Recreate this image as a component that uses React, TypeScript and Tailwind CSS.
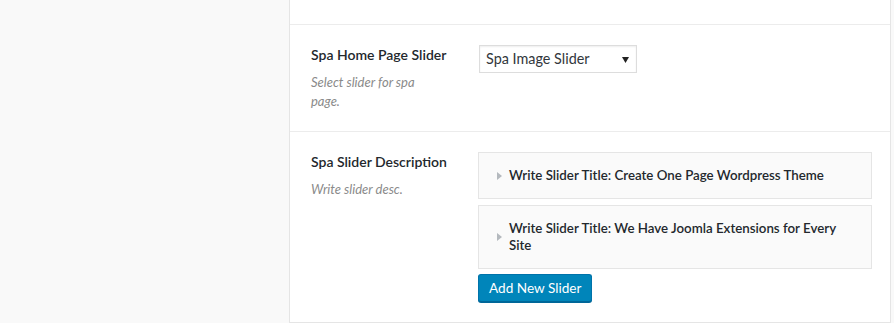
import React from "react";

type Slide = { title: string };

const slides: Slide[] = [
  { title: "Write Slider Title: Create One Page Wordpress Theme" },
  { title: "Write Slider Title: We Have Joomla Extensions for Every Site" },
];

function Caret() {
  return (
    <svg width="5" height="8" viewBox="0 0 5 8" className="shrink-0">
      <polygon points="0,0 5,4 0,8" fill="#b4b9be" />
    </svg>
  );
}

function FieldLabel({ title, desc }: { title: string; desc: string }) {
  return (
    <div className="w-[168px] shrink-0">
      <div className="text-[14px] leading-[19px] font-semibold text-[#23282d]">{title}</div>
      <p className="mt-[9px] w-[125px] text-[13px] leading-[19px] italic text-[#8a8a8a]">{desc}</p>
    </div>
  );
}

export default function App() {
  return (
    <div
      className="flex min-h-[323px] bg-[#f9f9f9]"
      style={{ fontFamily: 'Lato, "Open Sans", sans-serif' }}
    >
      <div className="w-[289px] shrink-0" />
      <div className="w-[602px] shrink-0 border-x border-b border-[#e5e5e5] bg-white">
        <div className="h-[25px] border-b border-[#ececec]" />

        <div className="flex border-b border-[#ececec] pt-5 pb-5 pl-[21px] pr-4">
          <FieldLabel title="Spa Home Page Slider" desc="Select slider for spa page." />
          <div className="relative flex h-[28px] w-[158px] items-center border border-[#dddddd] bg-white pl-[6px] shadow-[inset_0_1px_2px_rgba(0,0,0,0.07)]">
            <span className="text-[14.4px] text-[#32373c]">Spa Image Slider</span>
            <svg width="7" height="6" viewBox="0 0 7 6" className="absolute right-[7px] top-[11px]">
              <polygon points="0,0 7,0 3.5,6" fill="#222" />
            </svg>
          </div>
        </div>

        <div className="flex pt-5 pb-5 pl-[21px] pr-4">
          <FieldLabel title="Spa Slider Description" desc="Write slider desc." />
          <div className="-ml-px flex w-[394px] flex-col">
            {slides.map((s, i) => (
              <div
                key={i}
                className={`flex items-center gap-[7px] border border-[#e5e5e5] bg-[#fafafa] py-[14px] pl-[18px] pr-[30px] ${
                  i > 0 ? "mt-[6px]" : ""
                }`}
              >
                <Caret />
                <span className="text-[13.3px] leading-[17px] font-semibold text-[#23282d]">{s.title}</span>
              </div>
            ))}
            <div className="mt-[5px]">
              <button
                type="button"
                className="h-[28px] rounded-[3px] border border-[#0073aa] border-b-[#006799] bg-[#0085ba] px-[10px] text-[13.6px] text-white shadow-[0_1px_0_#006799]"
              >
                Add New Slider
              </button>
            </div>
          </div>
        </div>
      </div>
    </div>
  );
}
